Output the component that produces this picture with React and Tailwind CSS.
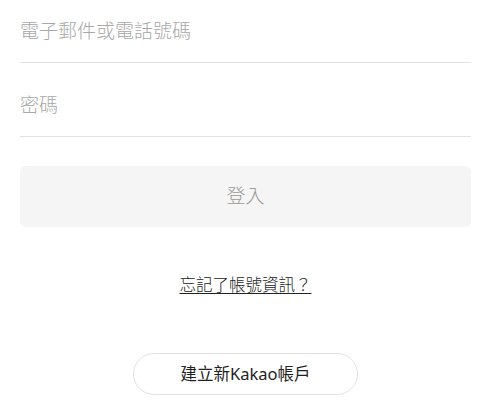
import React from 'react';

const font = { fontFamily: '"Noto Sans", "Noto Sans CJK TC", sans-serif' };

const Field = ({ placeholder, type = 'text', height }) => (
  <div className={`flex items-end border-b border-[#e2e2e2] pb-[19px] ${height}`}>
    <input
      type={type}
      placeholder={placeholder}
      className="w-full bg-transparent text-[19px] font-light leading-6 text-[#333] placeholder-[#a8a8a8] outline-none"
    />
  </div>
);

export default function App() {
  return (
    <div className="min-h-screen w-full bg-white" style={font}>
      <div className="flex flex-col pl-5 pr-[18px]">
        <Field placeholder="電子郵件或電話號碼" height="h-[63px]" />
        <Field placeholder="密碼" type="password" height="h-[74px]" />

        <button className="mt-[29px] h-[61px] w-full rounded-md bg-[#f5f5f5] text-[19px] font-light text-[#999]">
          登入
        </button>

        <div className="mt-[46px] flex justify-center">
          <a href="#" className="text-[16.5px] font-light leading-6 text-[#222] underline underline-offset-2">
            忘記了帳號資訊？
          </a>
        </div>

        <div className="mt-[56px] flex justify-center">
          <button className="h-[42px] w-[225px] rounded-full border border-[#e3e3e3] bg-white text-[16.5px] text-[#222]">
            建立新Kakao帳戶
          </button>
        </div>
      </div>
    </div>
  );
}
